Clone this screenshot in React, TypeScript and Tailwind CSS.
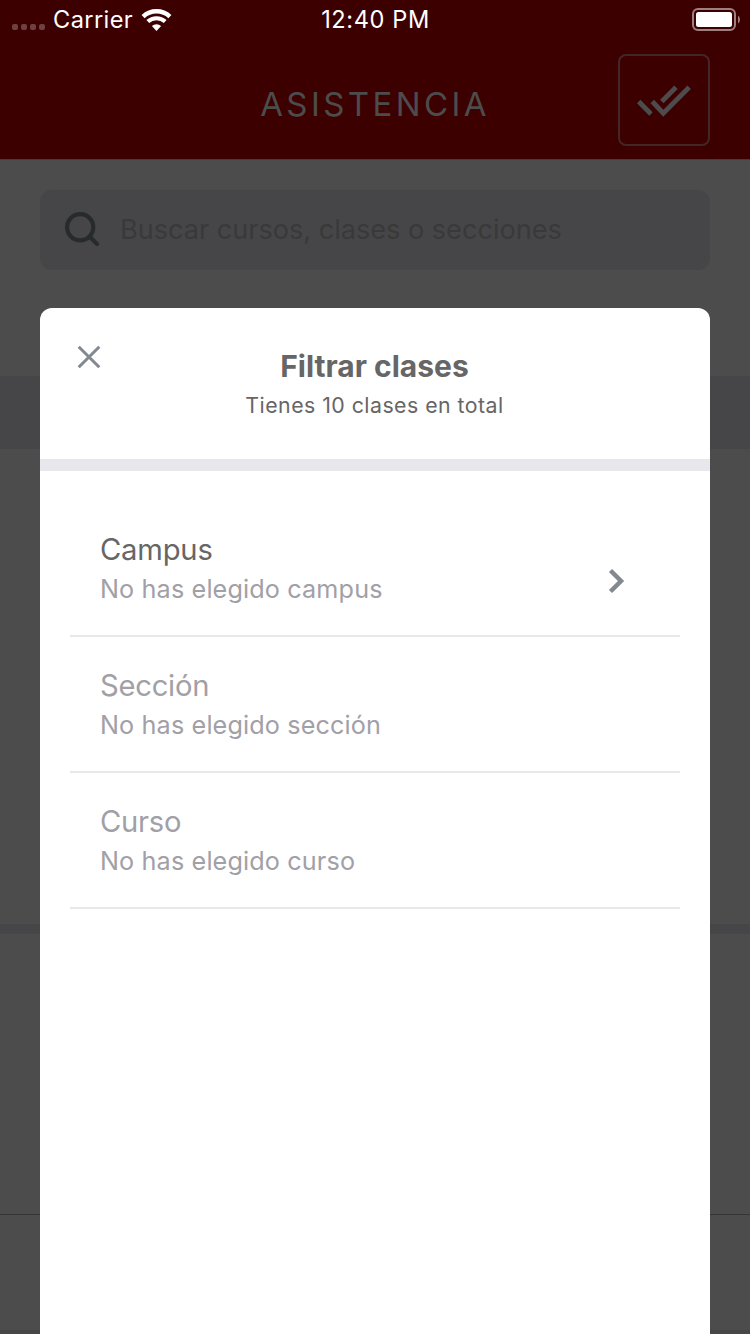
type Filter = { title: string; detail: string; enabled: boolean };

const filters: Filter[] = [
  { title: 'Campus', detail: 'No has elegido campus', enabled: true },
  { title: 'Sección', detail: 'No has elegido sección', enabled: false },
  { title: 'Curso', detail: 'No has elegido curso', enabled: false },
];

function StatusBar() {
  return (
    <div className="grid h-10 grid-cols-3 text-[23.6px] leading-[40px] text-white">
      <div className="flex items-center pl-3">
        <div className="mt-[14px] flex gap-[3px]">
          {[0, 1, 2, 3].map((dot) => (
            <span key={dot} className="size-1.5 rounded-[2px] bg-[#6e4040]" />
          ))}
        </div>
        <span className="ml-2 tracking-[0.4px]">Carrier</span>
        <svg className="ml-[8px]" width="31" height="24" viewBox="0 0 31 24" fill="none" stroke="#fff">
          <path d="M2.100 8.600A19.700 19.700 0 0 1 28.900 8.600" strokeWidth="4.500" />
          <path d="M6.800 13.600A12.800 12.800 0 0 1 24.200 13.600" strokeWidth="4.100" />
          <path d="M10.900 18A6.800 6.800 0 0 1 20.100 18L15.500 23Z" fill="#fff" stroke="none" />
        </svg>
      </div>
      <span className="pl-px text-center tracking-[0.6px]">12:40 PM</span>
      <div className="flex justify-end pt-2 pr-[10px]">
        <svg width="48" height="23" viewBox="0 0 48 23">
          <rect x="1" y="1" width="42" height="21" rx="5" fill="none" stroke="#9e8080" strokeWidth="2" />
          <rect x="4" y="4" width="36" height="15" rx="2.500" fill="#fff" />
          <path d="M46 7.500Q48 9 48 11.500Q48 14 46 15.500Z" fill="#9e8080" />
        </svg>
      </div>
    </div>
  );
}

function Header() {
  return (
    <header className="h-[160px] border-b border-[#413d3e] bg-[#3d0000]">
      <StatusBar />
      <div className="grid grid-cols-[1fr_auto_1fr] pt-[14px]">
        <span />
        <h1 className="pt-[26px] text-[33px] leading-[48px] tracking-[3.4px] text-[#4c4c4c]">ASISTENCIA</h1>
        <button className="mr-10 flex size-[92px] items-center justify-center justify-self-end rounded-[8px] border-2 border-[#442627]">
          <svg width="88" height="88" viewBox="0 0 88 88" fill="none" stroke="#4c4c4c" strokeWidth="4.800">
            <path d="M18.700 45.500L31 58M32.300 45.500L43.300 57.200L69.200 31.200M41.800 45.500L56 31.200" />
          </svg>
        </button>
      </div>
    </header>
  );
}

function FilterRow({ title, detail, enabled }: Filter) {
  return (
    <li className="flex h-[136px] items-center justify-between border-b-2 border-[#e8e7ec] pr-[54px] pl-[30px]">
      <div className="pt-[2px] text-[#a1a0a7]">
        <p className={enabled ? 'text-[29.2px] leading-[40px] tracking-[-0.2px] text-[#666]' : 'text-[29.2px] leading-[40px] tracking-[-0.25px]'}>{title}</p>
        <p className="text-[25.2px] leading-[39px] tracking-[0.14px]">{detail}</p>
      </div>
      {enabled && (
        <svg className="mt-[26px]" width="20" height="28" viewBox="0 0 20 28" fill="none" stroke="#828990" strokeWidth="4.500">
          <path d="M4.500 3.500L15 14L4.500 24.500" />
        </svg>
      )}
    </li>
  );
}

function FilterDialog() {
  return (
    <section className="absolute inset-x-10 top-[308px] bottom-0 rounded-t-[12px] bg-white text-[#666]">
      <div className="relative h-[163px] border-b-12 border-[#e8e7ec] pt-[38px] text-center">
        <button className="absolute top-[37px] left-[37px]">
          <svg width="24" height="24" viewBox="0 0 24 24" fill="none" stroke="#828990" strokeWidth="3">
            <path d="M1.700 1.700L22.300 22.300M22.300 1.700L1.700 22.300" />
          </svg>
        </button>
        <h2 className="pr-px text-[30px] leading-[40px] font-bold">Filtrar clases</h2>
        <p className="pr-px text-[21.300px] leading-[39px] tracking-[0.47px]">Tienes 10 clases en total</p>
      </div>
      <ul className="px-[30px] pt-[30px]">
        {filters.map((filter) => (
          <FilterRow key={filter.title} {...filter} />
        ))}
      </ul>
    </section>
  );
}

export default function App() {
  return (
    <main className="relative flex h-[1334px] w-[750px] flex-col overflow-hidden bg-[#4c4c4c] font-['Inter',sans-serif]">
      <Header />
      <div className="mx-10 mt-[30px] flex h-20 items-center rounded-[12px] bg-[#464648] pl-6">
        <svg width="36" height="36" viewBox="0 0 36 36" fill="none" stroke="#272b2d" strokeWidth="4.200" strokeLinecap="round">
          <circle cx="16.200" cy="15.200" r="13.100" />
          <path d="M26 25L33 32" />
        </svg>
        <span className="ml-5 text-[27.200px] tracking-[-0.05px] text-[#393939]">Buscar cursos, clases o secciones</span>
      </div>
      <div className="mt-[106px] h-[73px] bg-[#464648]" />
      <div className="mt-[475px] h-[10px] bg-[#464648]" />
      <div className="mt-[280px] h-px bg-[#353535]" />
      <div className="mt-[115px] h-[4px] bg-[#464648]" />
      <FilterDialog />
    </main>
  );
}
